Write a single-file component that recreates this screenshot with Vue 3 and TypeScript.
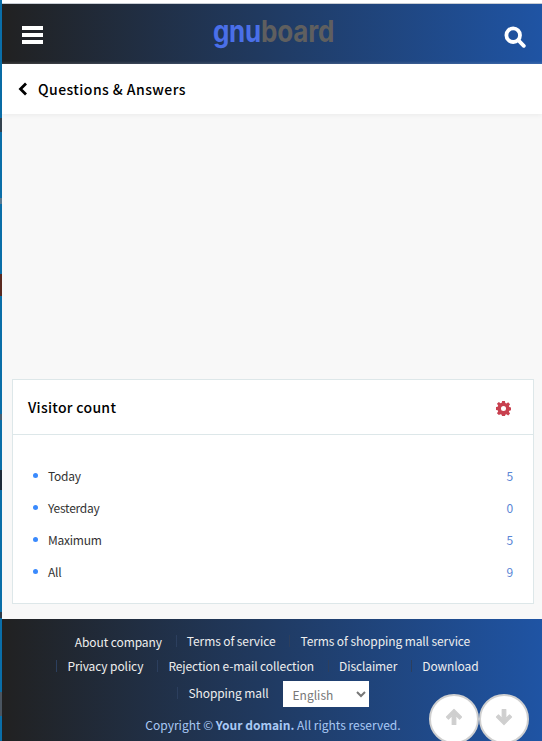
<script setup lang="ts">
const stats = [
  { label: 'Today', value: 5 },
  { label: 'Yesterday', value: 0 },
  { label: 'Maximum', value: 5 },
  { label: 'All', value: 9 },
]
const linksTop = ['About company', 'Terms of service', 'Terms of shopping mall service']
const linksBottom = ['Privacy policy', 'Rejection e-mail collection', 'Disclaimer', 'Download']
</script>

<template>
  <div class="page">
    <div class="edge" aria-hidden="true" />
    <div class="main">
      <div class="top-line" aria-hidden="true" />
      <header class="hd">
        <button class="hd-btn" aria-label="Menu">
          <svg width="21" height="18" viewBox="0 0 21 18"><path d="M0 0h21v4H0zM0 7h21v4H0zM0 14h21v4H0z" fill="#fff" /></svg>
        </button>
        <div class="logo"><span class="logo-a">gnu</span><span class="logo-b">board</span></div>
        <button class="hd-btn search" aria-label="Search">
          <svg width="22" height="22" viewBox="0 0 22 22"><circle cx="9.200" cy="9.200" r="6.800" fill="none" stroke="#fff" stroke-width="3.800" /><path d="M14.200 14.200l5.600 5.600" stroke="#fff" stroke-width="3.800" stroke-linecap="round" /></svg>
        </button>
      </header>

      <div class="title">
        <svg width="10" height="14" viewBox="0 0 10 14"><path d="M8 1.500L2.500 7 8 12.500" fill="none" stroke="#000" stroke-width="2.800" /></svg>
        <h1>Questions &amp; Answers</h1>
      </div>

      <main class="content">
        <section class="card">
          <div class="card-hd">
            <h2>Visitor count</h2>
            <svg class="gear" width="15" height="15" viewBox="0 0 16 16">
              <path fill="#c8404f" fill-rule="evenodd" d="M6.500 0h3l.4 2.200 1.200.5L13 1.400l2 2-1.300 1.900.5 1.200 2.200.4v3l-2.200.4-.5 1.200 1.300 1.900-2 2-1.900-1.300-1.200.5-.4 2.200h-3l-.4-2.200-1.200-.5L3 15l-2-2 1.300-1.900-.5-1.200L-.4 9.500v-3l2.200-.4.5-1.200L1 3l2-2 1.900 1.300 1.200-.5zM8 5.300a2.700 2.700 0 100 5.400 2.700 2.700 0 000-5.400z" />
            </svg>
          </div>
          <ul class="stats">
            <li v-for="s in stats" :key="s.label">
              <span class="dot" />
              <span class="label">{{ s.label }}</span>
              <span class="num">{{ s.value }}</span>
            </li>
          </ul>
        </section>
      </main>

      <footer class="ft">
        <div class="links">
          <a v-for="(l, i) in linksTop" :key="l" :class="{ sep: i > 0 }">{{ l }}</a>
        </div>
        <div class="links">
          <a v-for="l in linksBottom" :key="l" class="sep">{{ l }}</a>
        </div>
        <div class="links shop">
          <a class="sep">Shopping mall</a>
          <select class="lang">
            <option>English</option>
          </select>
        </div>
        <p class="copy">Copyright &copy; <b>Your domain.</b> All rights reserved.</p>
        <div class="top-btns">
          <button aria-label="Up">
            <svg width="18" height="18" viewBox="0 0 18 18"><path d="M9 1.500L1.500 9l2 2L7.200 7.300V16.500h3.600V7.300L14.500 11l2-2z" fill="#cfcfcf" stroke="#cfcfcf" stroke-width="1.200" stroke-linejoin="round" /></svg>
          </button>
          <button aria-label="Down">
            <svg width="18" height="18" viewBox="0 0 18 18"><path d="M9 16.500L1.500 9l2-2 3.700 3.700V1.500h3.600v9.200L14.500 7l2 2z" fill="#cfcfcf" stroke="#cfcfcf" stroke-width="1.200" stroke-linejoin="round" /></svg>
          </button>
        </div>
      </footer>
    </div>
  </div>
</template>

<style>
html,
body {
  margin: 0;
  background: #f8f8f8;
}
</style>

<style scoped>
.page {
  display: flex;
  width: 542px;
  height: 741px;
  overflow: hidden;
  font-family: "Noto Sans CJK KR", "Noto Sans", sans-serif;
}

/* sliver of the desktop behind the window */
.edge {
  flex: 0 0 2px;
  background: linear-gradient(
    180deg,
    #0a6ea8 0 118px, #33424f 118px 132px,
    #0a6ea8 132px 198px, #5b7a90 198px 204px,
    #0a6ea8 204px 274px, #5a2a20 274px 296px,
    #0a6ea8 296px 414px, #4a5f70 414px 420px,
    #0a6ea8 420px 470px, #1c2a38 470px 490px,
    #0a6ea8 490px 612px, #2b3a48 612px 618px,
    #0a6ea8 618px 692px, #4a5560 692px 716px,
    #0a6ea8 716px
  );
}

.main {
  flex: 1;
  min-width: 0;
  display: flex;
  flex-direction: column;
  background: #f8f8f8;
}

.top-line {
  height: 3px;
  flex: none;
  background: #fff;
  border-bottom: 1px solid #c8cdd4;
}

.hd {
  height: 60px;
  flex: none;
  box-sizing: border-box;
  display: flex;
  align-items: center;
  justify-content: space-between;
  padding: 2px 16px 0 20px;
  background: linear-gradient(90deg, #212121, #1f54a4);
  box-shadow: inset 0 -3px 3px -2px rgba(255, 255, 255, 0.18);
}

.hd-btn {
  padding: 0;
  border: 0;
  background: none;
  display: flex;
}

.search {
  margin-top: 3px;
}

.logo {
  font-family: "Inter", sans-serif;
  font-weight: 700;
  font-size: 26px;
  letter-spacing: -0.2px;
  line-height: 1;
  margin-top: -6px;
  transform: scaleY(1.15);
}

.logo-a {
  color: #4a6fe8;
}

.logo-b {
  color: #5f5f5f;
}

.title {
  height: 50px;
  flex: none;
  display: flex;
  align-items: center;
  gap: 10px;
  padding-left: 16px;
  background: #fff;
  box-shadow: 0 1px 5px rgba(0, 0, 0, 0.06);
}

.title h1 {
  margin: 0;
  font-size: 14px;
  font-weight: 500;
  line-height: 20px;
  color: #000;
  letter-spacing: 0.45px;
}

.content {
  flex: 1;
  display: flex;
  flex-direction: column;
  justify-content: flex-end;
  padding: 0 8px 15px 10px;
}

.card {
  background: #fff;
  border: 1px solid #dde7e9;
}

.card-hd {
  height: 54px;
  display: flex;
  align-items: center;
  justify-content: space-between;
  padding: 0 22px 0 15px;
  border-bottom: 1px solid #dde7e9;
}

.card-hd h2 {
  margin: 0;
  font-size: 14px;
  font-weight: 500;
  line-height: 20px;
  letter-spacing: 0.3px;
  color: #000;
}

.gear {
  margin-top: 2px;
}

.stats {
  list-style: none;
  margin: 0;
  padding: 25px 20px 15px 20px;
}

.stats li {
  height: 32px;
  display: flex;
  align-items: center;
  font-size: 12px;
  line-height: 18px;
  letter-spacing: -0.25px;
  color: #333;
}

.dot {
  width: 5px;
  height: 5px;
  border-radius: 50%;
  background: #3a8afd;
  margin-right: 10px;
  margin-top: -2px;
}

.label {
  flex: 1;
}

.num {
  color: #5a86d6;
}

.ft {
  position: relative;
  height: 122px;
  flex: none;
  box-sizing: border-box;
  padding-top: 10px;
  background: linear-gradient(90deg, #212121, #1f54a4);
  color: #fff;
  text-align: center;
  font-size: 12px;
}

.links {
  height: 24px;
  display: flex;
  justify-content: center;
  align-items: center;
  padding-left: 5px;
  letter-spacing: -0.1px;
}

.links + .links {
  margin-top: 1px;
}

.links a {
  padding: 0 14px 0 10px;
  color: #eee;
}

.links a.sep {
  border-left: 1px solid #2c3f5e;
  line-height: 12px;
}

.links.shop {
  height: 32px;
  margin-top: 0;
  padding-left: 2px;
}

.shop a {
  margin-top: -3px;
}

.lang {
  width: 86px;
  height: 26px;
  border: 0;
  border-radius: 0;
  background: #fff;
  color: #777;
  font: 12px "Noto Sans CJK KR", sans-serif;
  padding-left: 6px;
}

.copy {
  margin: 6px 0 0;
  padding-left: 2px;
  line-height: 18px;
  color: #a9c9f5;
  font-size: 12px;
}

.copy b {
  font-weight: 700;
}

.top-btns {
  position: absolute;
  right: 13px;
  top: 75px;
  display: flex;
}

.top-btns button {
  width: 50px;
  height: 50px;
  box-sizing: border-box;
  padding: 0 0 4px;
  display: flex;
  align-items: center;
  justify-content: center;
  border: 2px solid #d0d0d0;
  border-radius: 50%;
  background: #fff;
}
</style>
